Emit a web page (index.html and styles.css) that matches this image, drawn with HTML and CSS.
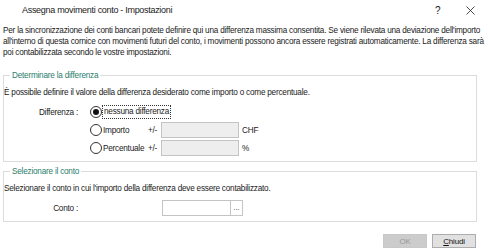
FILE: index.html
```html
<!DOCTYPE html>
<html lang="it">
<head>
  <meta charset="UTF-8">
  <meta name="viewport" content="width=device-width, initial-scale=1.0">
  <title>Assegna movimenti conto - Impostazioni</title>
  <link rel="stylesheet" href="styles.css">
</head>
<body>
  <div class="dialog">
    <div class="titlebar">
      <span class="title">Assegna movimenti conto - Impostazioni</span>
      <span class="help">?</span>
      <span class="close">
        <svg width="9" height="9" viewBox="0 0 9 9"><path d="M0.5 0.5 L8.5 8.5 M8.5 0.5 L0.5 8.5" stroke="#333" stroke-width="0.9" fill="none"/></svg>
      </span>
    </div>

    <p class="intro">Per la sincronizzazione dei conti bancari potete definire qui una differenza massima consentita. Se viene rilevata una deviazione dell'importo<br>all'interno di questa cornice con movimenti futuri del conto, i movimenti possono ancora essere registrati automaticamente. La differenza sarà<br>poi contabilizzata secondo le vostre impostazioni.</p>

    <fieldset class="group">
      <legend>Determinare la differenza</legend>
      <p class="hint">È possibile definire il valore della differenza desiderato come importo o come percentuale.</p>
      <div class="grid">
        <span class="lbl">Differenza :</span>
        <span class="opt wide"><span class="radio checked"></span><span class="focus">nessuna differenza</span></span>

        <span></span>
        <span class="opt"><span class="radio"></span>Importo</span>
        <span class="pm">+/-</span>
        <span class="field disabled"></span>
        <span class="unit">CHF</span>

        <span></span>
        <span class="opt"><span class="radio"></span>Percentuale</span>
        <span class="pm">+/-</span>
        <span class="field disabled"></span>
        <span class="unit">%</span>
      </div>
    </fieldset>

    <fieldset class="group second">
      <legend>Selezionare il conto</legend>
      <p class="hint">Selezionare il conto in cui l'importo della differenza deve essere contabilizzato.</p>
      <div class="grid conto">
        <span class="lbl">Conto :</span>
        <span class="picker"><span class="field small"></span><span class="dots">...</span></span>
      </div>
    </fieldset>

    <div class="footer">
      <button class="btn off" disabled>OK</button>
      <button class="btn"><u>C</u>hiudi</button>
    </div>
  </div>
</body>
</html>
```

FILE: styles.css
```css
body{margin:0; background:#fff; font-family:"Liberation Sans", Arial, sans-serif; font-size:8.2px; letter-spacing:-0.22px; color:#1a1a1a;}
.dialog{width:488px; height:251px; overflow:hidden;}

.titlebar{display:flex; align-items:center; height:20px; font-size:9px; letter-spacing:-0.3px;}
.title{padding-left:22px; flex:1;}
.help{width:31px; font-size:10px;}
.close{width:22px; display:flex; align-items:center;}

.intro{margin:5px 0 0 3px; line-height:11px; white-space:nowrap;}

.group{margin:12px 11px 0 3px; padding:0 0 4px 0; border:1px solid #dcdcdc; min-width:0;}
.group legend{margin-left:6px; padding:0 2px; line-height:11px; color:#2b7d6c;}
.group.second{margin-top:4px;}

.hint{margin:6px 0 0 0; line-height:11px;}

.grid{display:grid; grid-template-columns:86px 58px 13px 78px auto; grid-auto-rows:18px; align-items:center; margin-top:5px;}
.lbl{text-align:right; padding-right:12px;}
.opt{display:flex; align-items:center;}
.opt.wide{grid-column:2 / 6;}
.radio{width:10px; height:10px; border:1px solid #333; border-radius:50%; margin-right:1px; position:relative; flex:none;}
.radio.checked:after{content:""; position:absolute; left:2px; top:2px; width:6px; height:6px; border-radius:50%; background:#111;}
.focus{outline:1px dotted #333; padding:0 1px; line-height:12px;}
.field{display:block; height:14px; border:1px solid #c4c4c4; background:#fff;}
.field.disabled{background:#eeeeee;}
.unit{padding-left:3px;}

.grid.conto{margin-top:5px;}
.picker{grid-column:4 / 6; display:flex; padding-left:1px;}
.field.small{width:67px; border-right:0;}
.dots{width:11px; height:14px; border:1px solid #c4c4c4; display:flex; align-items:center; justify-content:center; font-size:7px; line-height:8px; letter-spacing:0;}

.footer{display:flex; justify-content:flex-end; gap:5px; margin:12px 12px 0 0;}
.btn{width:44px; height:14px; padding:0; border:1px solid #adadad; background:#e1e1e1; font-family:inherit; font-size:8px; letter-spacing:-0.2px; color:#111;}
.btn.off{border-color:#c8c8c8; background:#cccccc; color:#9a9a9a;}
```
